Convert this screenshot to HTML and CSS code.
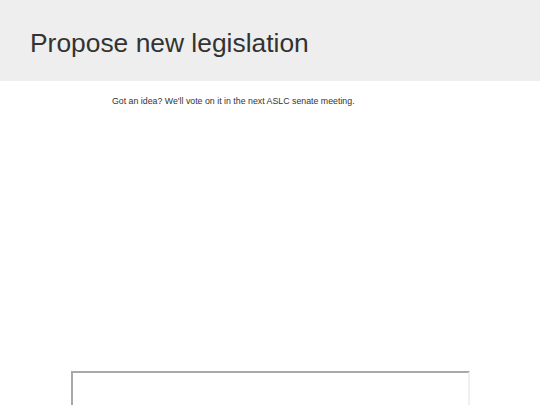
FILE: index.html
```html
<!DOCTYPE html>
<html>
<head>
<meta charset="utf-8">
<link rel="stylesheet" href="styles.css">
</head>
<body>
<header class="hero">
  <h1 class="title">Propose new legislation</h1>
</header>
<main class="content">
  <p class="intro">Got an idea? We'll vote on it in the next ASLC senate meeting.</p>
  <div class="frame"></div>
</main>
</body>
</html>
```
FILE: styles.css
```css
html, body {
  margin: 0;
  padding: 0;
  background: #fff;
  font-family: "Liberation Sans", Arial, sans-serif;
  color: #333;
  overflow: hidden;
}
.hero {
  background: #eeeeee;
  height: 81px;
  padding: 30px 0 0 30px;
  box-sizing: border-box;
  display: flex;
  align-items: flex-start;
}
.title {
  margin: 0;
  font-size: 26.4px;
  font-weight: normal;
  line-height: 1;
  color: #333;
}
.content {
  padding-left: 112px;
}
.intro {
  margin: 15px 0 0 0;
  font-size: 8.8px;
  line-height: 11px;
  color: #333;
}
.frame {
  margin: 264px 0 0 -41px;
  width: 395px;
  height: 150px;
  border-style: solid;
  border-width: 2px;
  border-color: #a9a9a9 #f0f0f0 #f0f0f0 #a9a9a9;
}
```
